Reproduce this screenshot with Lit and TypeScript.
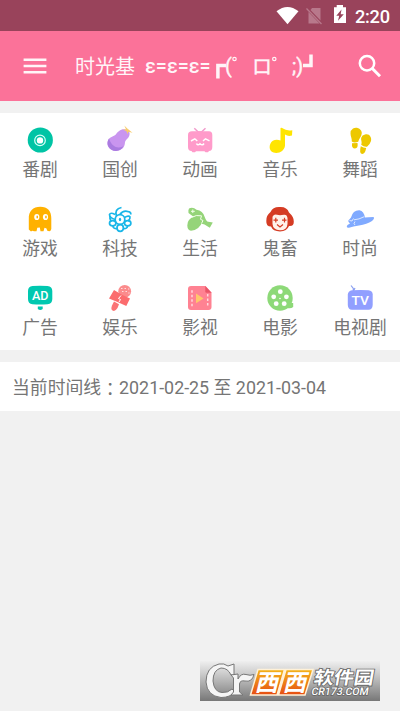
import { LitElement, html, svg, css } from "lit";
import { customElement } from "lit/decorators.js";

const categories = [
  { name: "番剧", icon: svg`
    <circle cx="16.3" cy="16" r="12.6" fill="#00c4a5"/>
    <circle cx="16" cy="16.4" r="5.3" fill="none" stroke="#d9fff8" stroke-width="1.2"/>
    <circle cx="16" cy="16.4" r="3.2" fill="#fff"/>` },
  { name: "国创", icon: svg`
    <path d="M22 5.5C26 6 27 11 23.5 14.5C21 16.5 21 18 20.8 20C20 25 15 27.5 10 26.8C4.5 25.5 1.500 20 4.500 15.500C6.500 12.500 9.500 12.500 11.800 10.500C14 7.500 17 4.300 22 5.500Z" fill="#c995ef"/>
    <path d="M5 14.500C1.500 20 5 27 12 27C15.500 26.700 18 25 19.300 22.200C14 25 8 23.500 5 14.500Z" fill="#aa7be0"/>
    <path d="M19 5.700L22 5.300L20.300 1.500L23.300 4.500L28.500 8.800L24.200 7.800L23.800 10.200L22.300 7Z" fill="#f8cd6d"/>` },
  { name: "动画", icon: svg`
    <path d="M10.300 4.300L14.200 8L17.500 8L21.500 4.300" fill="none" stroke="#f19acb" stroke-width="1.5"/>
    <path d="M8 7.300H25Q28.300 7.300 28.300 11V23Q28.300 27 25 27L24 28.300H21.500L20.500 27.200H12L11 28.300H8.500L7.500 27Q4 27 4 23V11Q4 7.300 8 7.300Z" fill="#ff9bca"/>
    <path d="M7 17L10.800 14.800L13.300 17M19 17L21.500 14.800L25.500 16.800M12.500 19.500Q13.500 22 16 19.800Q18.500 22 20 19.500" fill="none" stroke="#fff" stroke-width="1.500"/>` },
  { name: "音乐", icon: svg`
    <path d="M16.500 4Q18 3.500 19 4.600Q22 7 28.300 6.200L28 11.500Q24 12.700 21 10.500V21.500C20.500 27 15 30 9.500 28.600C4.500 27 4.500 20 8.800 16.800C11 15.300 14 15.300 16.500 16.500Z" fill="#ffe500"/>` },
  { name: "舞蹈", icon: svg`
    <path d="M9 4.500C13 2.500 17.500 5 17.800 9C17.700 12.500 15 14.500 14.200 17.700Q10.500 19.300 7.800 17.500C8 14.500 6.500 12 6.500 9.500Q6.500 6 9 4.500ZM8 19.300L13.500 18.900Q14.500 24 11 24.500Q7.500 24.500 8 19.300ZM21 10.500C25 9 28 13 27 17Q26 20.500 23 22.700Q19.500 23 17.200 20.800C18.500 18 16.500 16 17.300 13.500Q18 11 21 10.500ZM16.800 22.200Q19.500 24 22.200 24Q21 30.300 18 29.900Q15 29 16.800 22.200Z" fill="#edc800"/>` },
  { name: "游戏", icon: svg`
    <path d="M4.800 16C4.500 8 9 3.700 16.300 3.700C23.500 3.700 27.500 8 27.300 15.500V26Q26.500 29 24.500 28Q23 28.500 22.500 25.500L20.500 24.700L19.500 28.300H16.500L15.800 24.500L13.300 24.800L12.500 28.300H10L8.300 27.800L7 28.500L4.800 26.500Z" fill="#ffb100"/>
    <ellipse cx="12.800" cy="14" rx="2.600" ry="3.100" fill="#fff"/><ellipse cx="21.500" cy="14" rx="2.600" ry="3.100" fill="#fff"/>
    <path d="M12.500 12.700h1.500v2.600h-1.500zM21.200 12.700h1.500v2.600h-1.500z" fill="#ffb100"/>` },
  { name: "科技", icon: svg`
    <g fill="none" stroke="#19b6e8" stroke-width="1.700">
      <circle cx="16" cy="16.500" r="4.800"/>
      <ellipse cx="8.700" cy="20.300" rx="3.200" ry="2.600"/><ellipse cx="23.700" cy="20.300" rx="3.200" ry="2.600"/>
      <ellipse cx="16.200" cy="25" rx="3.200" ry="3.300"/>
      <path d="M9 23Q9 26 13.500 25.500M23.500 23Q23.500 26 19 25.500M12.500 13.500Q10 6 17.500 4.500M16 11.500Q19 7 24.500 8.700Q27 9 26.800 11.500M11.300 16.500Q5.500 15 5.500 11.500Q6.500 9 11 11.500M20.500 14.500Q25 12 26 14Q26.500 16 24 18M6 14Q5.500 17 8 18"/>
    </g><ellipse cx="16" cy="16.500" rx="1.200" ry="1.800" fill="#19b6e8"/>` },
  { name: "生活", icon: svg`
    <path d="M5 5.500Q9 3.700 12.500 6.800Q19 8 20.500 13.500Q22.500 19 24.500 18.700L28.800 19.500L25.800 24.700L20.500 21.500L17 20.500L15 14L8.500 13L4.500 10Q4 7 5 5.500Z" fill="#95d479"/>
    <path d="M5 17Q10 11.500 17.500 12.800L16.500 16.500L18.500 18.500Q15 27.500 7 27.700Q3.500 27.500 3.300 22.500Q3.200 19 5 17Z" fill="#95d479"/>
    <path d="M7.500 14.500Q12 11.500 17.500 12.800L16.500 16.300L19 17.500L17.500 20.500M8.800 6.500V10M7 8.300H10.800" fill="none" stroke="#f2ffe9" stroke-width="1"/>` },
  { name: "鬼畜", icon: svg`
    <path d="M6.500 9Q9 3.500 16 4Q23 3.700 25 9.500Q30 14 29.800 18.500Q30 23.500 25 23Q23 28.300 16 28.500Q9 28.300 7 23.500Q2 23.500 2.300 18Q2 12.500 6.500 9Z" fill="#d53c24"/>
    <path d="M8.500 13.800Q10 11 13 11.800Q16 12.500 20 11.700Q23 11.300 23.500 15V21Q23 27.300 16 27.300Q9 27 8.500 21Z" fill="#fff2eb"/>
    <path d="M11.800 14.800V19.500M9.500 17.200H14M20.500 14.800V19.500M18 17.200H22.500M13 21.500L16 24L19 21.500" stroke="#d53c24" stroke-width="1.200" fill="none"/>` },
  { name: "时尚", icon: svg`
    <path d="M7 14.500Q9 7 15.500 7.300Q20 8 20.800 14.500Q24 14.300 29.500 14Q31 15.500 28 18Q23 21 15 22.500Q9 23.300 5 24.700Q1.500 25 3.500 22L6 20.500Q3 18 5.300 16.500Z" fill="#80aaff"/>
    <path d="M10 16.800Q15 16.500 20 13.800M5.500 17.500L8 18L9.500 15.500M11 18.500L10 20.500L11 22" fill="none" stroke="#e7efff" stroke-width=".9"/>` },
  { name: "广告", icon: svg`
    <path d="M8.500 4Q16 3.300 23.500 4Q28.300 4.500 28.300 9V17Q28.300 21.800 23.500 22.200Q16 23 8.500 22.200Q4 21.800 4 17V9Q4 4.500 8.500 4Z" fill="#00c8b0"/>
    <path d="M13.800 24.500H18.700V27Q16.200 28.800 13.800 27Z" fill="#00c8b0"/>
    <text x="16.200" y="17.600" text-anchor="middle" textLength="16.500" lengthAdjust="spacingAndGlyphs" font-family="Roboto,sans-serif" font-size="13" font-weight="500" fill="#fff">AD</text>` },
  { name: "娱乐", icon: svg`
    <circle cx="20.700" cy="9.300" r="6.400" fill="#fb8b8c"/>
    <path d="M17 6.500h1.500m2 0h1.500m-4 3h1.500m2 0h1.500m1-2.500h1.300m-1 4h1.300" stroke="#ffdede" stroke-width="1"/>
    <path d="M10 8L17.500 12.500L26 16.500L22.300 24L13.500 20L5 16.500Z" fill="#fb6c6e"/>
    <path d="M10 19.500L15 22.300L13.500 26Q11 30 8.500 28.500Q6.500 27 8 23.500Z" fill="#fb7476"/>
    <path d="M17 13.500L14.500 16.500L16.500 17.500L15 20" fill="none" stroke="#fff" stroke-width="1"/>` },
  { name: "影视", icon: svg`
    <path d="M7 4H21.500L27.500 10.500V25Q27.500 28 24.500 28H7Q4 28 4 25V7Q4 4 7 4Z" fill="#ff8292"/>
    <path d="M21.300 4L27.500 10.800H22.500Q21.300 10.800 21.300 9.500Z" fill="#e95568"/>
    <path d="M8 8.200V25M23.700 12V25" stroke="#ffd8dd" stroke-width="1.500" stroke-dasharray="2.500 2"/>
    <path d="M12 11.500L19.500 16.400L12 21.300Z" fill="#ffc66c"/>` },
  { name: "电影", icon: svg`
    <circle cx="16" cy="16" r="12.700" fill="#8dd978"/><path d="M26 21L29.200 21V25Q27 27 23 26Z" fill="#8dd978"/>
    <g fill="#fff"><circle cx="16.300" cy="9.700" r="2.400"/><circle cx="9.700" cy="14.800" r="2.400"/><circle cx="22.400" cy="14.800" r="2.400"/><circle cx="12.200" cy="21.700" r="2.400"/><circle cx="20.200" cy="21.700" r="2.400"/><circle cx="16" cy="16.500" r=".8"/></g>` },
  { name: "电视剧", icon: svg`
    <path d="M7 3.500L9.300 6.500V9M11 6L9.500 9" fill="none" stroke="#8a9ff1" stroke-width="1.200"/>
    <path d="M8 8.300Q17 7.500 24.500 8.300Q28.500 8.800 28.700 12.500V23Q28.500 27.500 24.500 27.800H8Q4 27.500 3.800 23V12.500Q4 9 8 8.300Z" fill="#919fff"/>
    <text x="16.300" y="22.800" text-anchor="middle" textLength="17.500" lengthAdjust="spacingAndGlyphs" font-family="Roboto,sans-serif" font-size="12.500" font-weight="500" fill="#fff">TV</text>` },
];

@customElement("app-root")
export class AppRoot extends LitElement {
  static styles = css`
    :host { display: flex; flex-direction: column; height: 711px; background: #f1f1f1; color: #757575;
      font-family: Roboto, "Noto Sans CJK SC", sans-serif; overflow: hidden; position: relative; }
    svg { display: block; flex: none; }
    .status { height: 31px; background: #99435b; display: flex; justify-content: flex-end; flex: none; }
    .bar { height: 70px; background: #fb7299; display: flex; align-items: center; color: #fff; flex: none; }
    .menu { margin: 0 28px 0 23px; }
    .title { width: 280px; display: flex; align-items: center; height: 30px; line-height: 30px; font-size: 20px; white-space: pre; color: #fff5f8; }
    .name { width: 70px; padding-top: 2px; }
    .eps { width: 68px; font-weight: 500; font-size: 19.7px; padding-top: 2px; }
    .grid { margin-top: 12px; height: 237px; background: #fff; display: grid; grid-template-columns: repeat(5, 80px); grid-template-rows: repeat(3, 79px); flex: none; }
    .cell { display: flex; flex-direction: column; align-items: center; padding-top: 11px; }
    .label { font-size: 17.8px; line-height: 27px; white-space: nowrap; }
    .timeline { margin-top: 12px; height: 49px; line-height: 52px; background: #fff; padding-left: 12px; font-size: 17.85px; white-space: pre; flex: none; }
    .colon { font-family: "Noto Sans CJK TC", sans-serif; line-height: 0; vertical-align: -2px; }
    .mark { position: absolute; left: 200px; top: 661px; }
  `;

  render() {
    return html`
      <div class="status">
        <svg width="130" height="31" viewBox="270 0 130 31">
          <path d="M276.500 11.300Q287.500 2.500 298.500 11.300L287.500 24.300Z" fill="#fff"/>
          <path d="M312 8H320.500V20.500L310.500 10ZM308.500 12L319.500 23.500H308.500Z" fill="#b8788b"/>
          <path d="M306.500 8.500L321.500 24" stroke="#b8788b" stroke-width="1.300"/>
          <path d="M336.700 5H343V7.200H346V23H334V7.200H336.700Z" fill="#fff"/>
          <path d="M341.500 9.500L336.300 15.800H339.200L338 20.800L343.800 14.300H340.700Z" fill="#99435b"/>
          <text x="355" y="23" font-family="Roboto,sans-serif" font-size="18.200" font-weight="500" fill="#fff" textLength="35">2:20</text>
        </svg>
      </div>
      <div class="bar">
        <svg class="menu" width="24" height="20" viewBox="0 0 24 20"><path d="M.6 4H23.400M.6 10.200H23.400M.6 16.500H23.400" transform="translate(0 -.2)" stroke="#fff5f8" stroke-width="2.500"/></svg>
        <div class="title"><span class="name">时光基</span><span class="eps">ε=ε=ε=</span><svg width="110" height="30" viewBox="213 51 110 30">
            <g font-family="Roboto,'Noto Sans CJK JP',sans-serif" font-size="20" fill="#fff5f8">
              <path d="M217.900 78.500V65.600H226M303 65.600H311V54.500" fill="none" stroke="#fff5f8" stroke-width="3.500"/>
              <text x="225" y="73" stroke="#fff5f8" stroke-width=".4">(</text>
              <circle cx="234.500" cy="59" r="1.700" fill="none" stroke="#fff5f8" stroke-width="1.200"/>
              <text x="252" y="73.500" stroke="#fff5f8" stroke-width=".4">ロ</text>
              <circle cx="274.300" cy="59" r="1.700" fill="none" stroke="#fff5f8" stroke-width="1.200"/>
              <text x="292" y="73" stroke="#fff5f8" stroke-width=".4">;)</text>
            </g></svg></div>
        <svg width="30" height="30" viewBox="355 51 30 30"><circle cx="367" cy="63.300" r="7.200" fill="none" stroke="#fff" stroke-width="2.500"/><path d="M371.800 68L380 76.300" stroke="#fff" stroke-width="3"/></svg>
      </div>
      <div class="grid">${categories.map(c => html`
        <div class="cell"><svg width="32" height="32" viewBox="0 0 32 32">${c.icon}</svg><div class="label">${c.name}</div></div>`)}
      </div>
      <div class="timeline">当前时间线<span class="colon" lang="zh-TW">：</span>2021-02-25 至 2021-03-04</div>
      <svg class="mark" width="180" height="40" viewBox="0 0 180 40">
        <defs>
          <linearGradient id="bg" x2="0" y2="1"><stop stop-color="#efefef"/><stop offset=".3" stop-color="#cecece"/><stop offset="1" stop-color="#777"/></linearGradient>
          <linearGradient id="or" x2="0" y2="1"><stop stop-color="#f4b51c"/><stop offset="1" stop-color="#e64c12"/></linearGradient>
        </defs>
        <rect width="180" height="40" fill="url(#bg)"/>
        <path d="M28 5L34 3V14L31 14Q28 7 21 7Q13 9 13 20Q14 31 22 31.500Q28 32 32 28L35 31Q30 36.500 21 36.500Q7 35 6 21Q6 6 19 3Q24 2 28 5Z" fill="#f5f5f5" stroke="#777" stroke-width="1"/>
        <path d="M31 14L38 13V18Q41 12 46 13.500Q50 15 54 13.500Q52 21.500 45 20Q40 19 39.500 23V31L43 34H31L33.500 31V17Z" fill="#f5f5f5" stroke="#777" stroke-width="1"/>
        <path d="M58 8.500H84.500L77 34H50.500ZM86 8.500H113L105 34H78.500Z" fill="url(#or)" stroke="#fff1d8" stroke-width="1.500"/>
        <g font-family="'Noto Sans CJK SC',sans-serif" font-weight="700" fill="#fff">
          <text transform="translate(54.500 29.500) skewX(-14)" font-size="23.500">西</text>
          <text transform="translate(82.500 29.500) skewX(-14)" font-size="23.500">西</text>
          <g stroke="#666" stroke-width="1.600" paint-order="stroke">
            <text transform="translate(113 22.500) skewX(-10)" font-size="18" font-weight="700" textLength="60" lengthAdjust="spacingAndGlyphs">软件园</text>
            <text transform="translate(111 34) skewX(-10)" font-size="10.500" font-family="Roboto,sans-serif" font-weight="500" textLength="57" lengthAdjust="spacingAndGlyphs">CR173.COM</text>
          </g>
        </g>
      </svg>`;
  }
}
